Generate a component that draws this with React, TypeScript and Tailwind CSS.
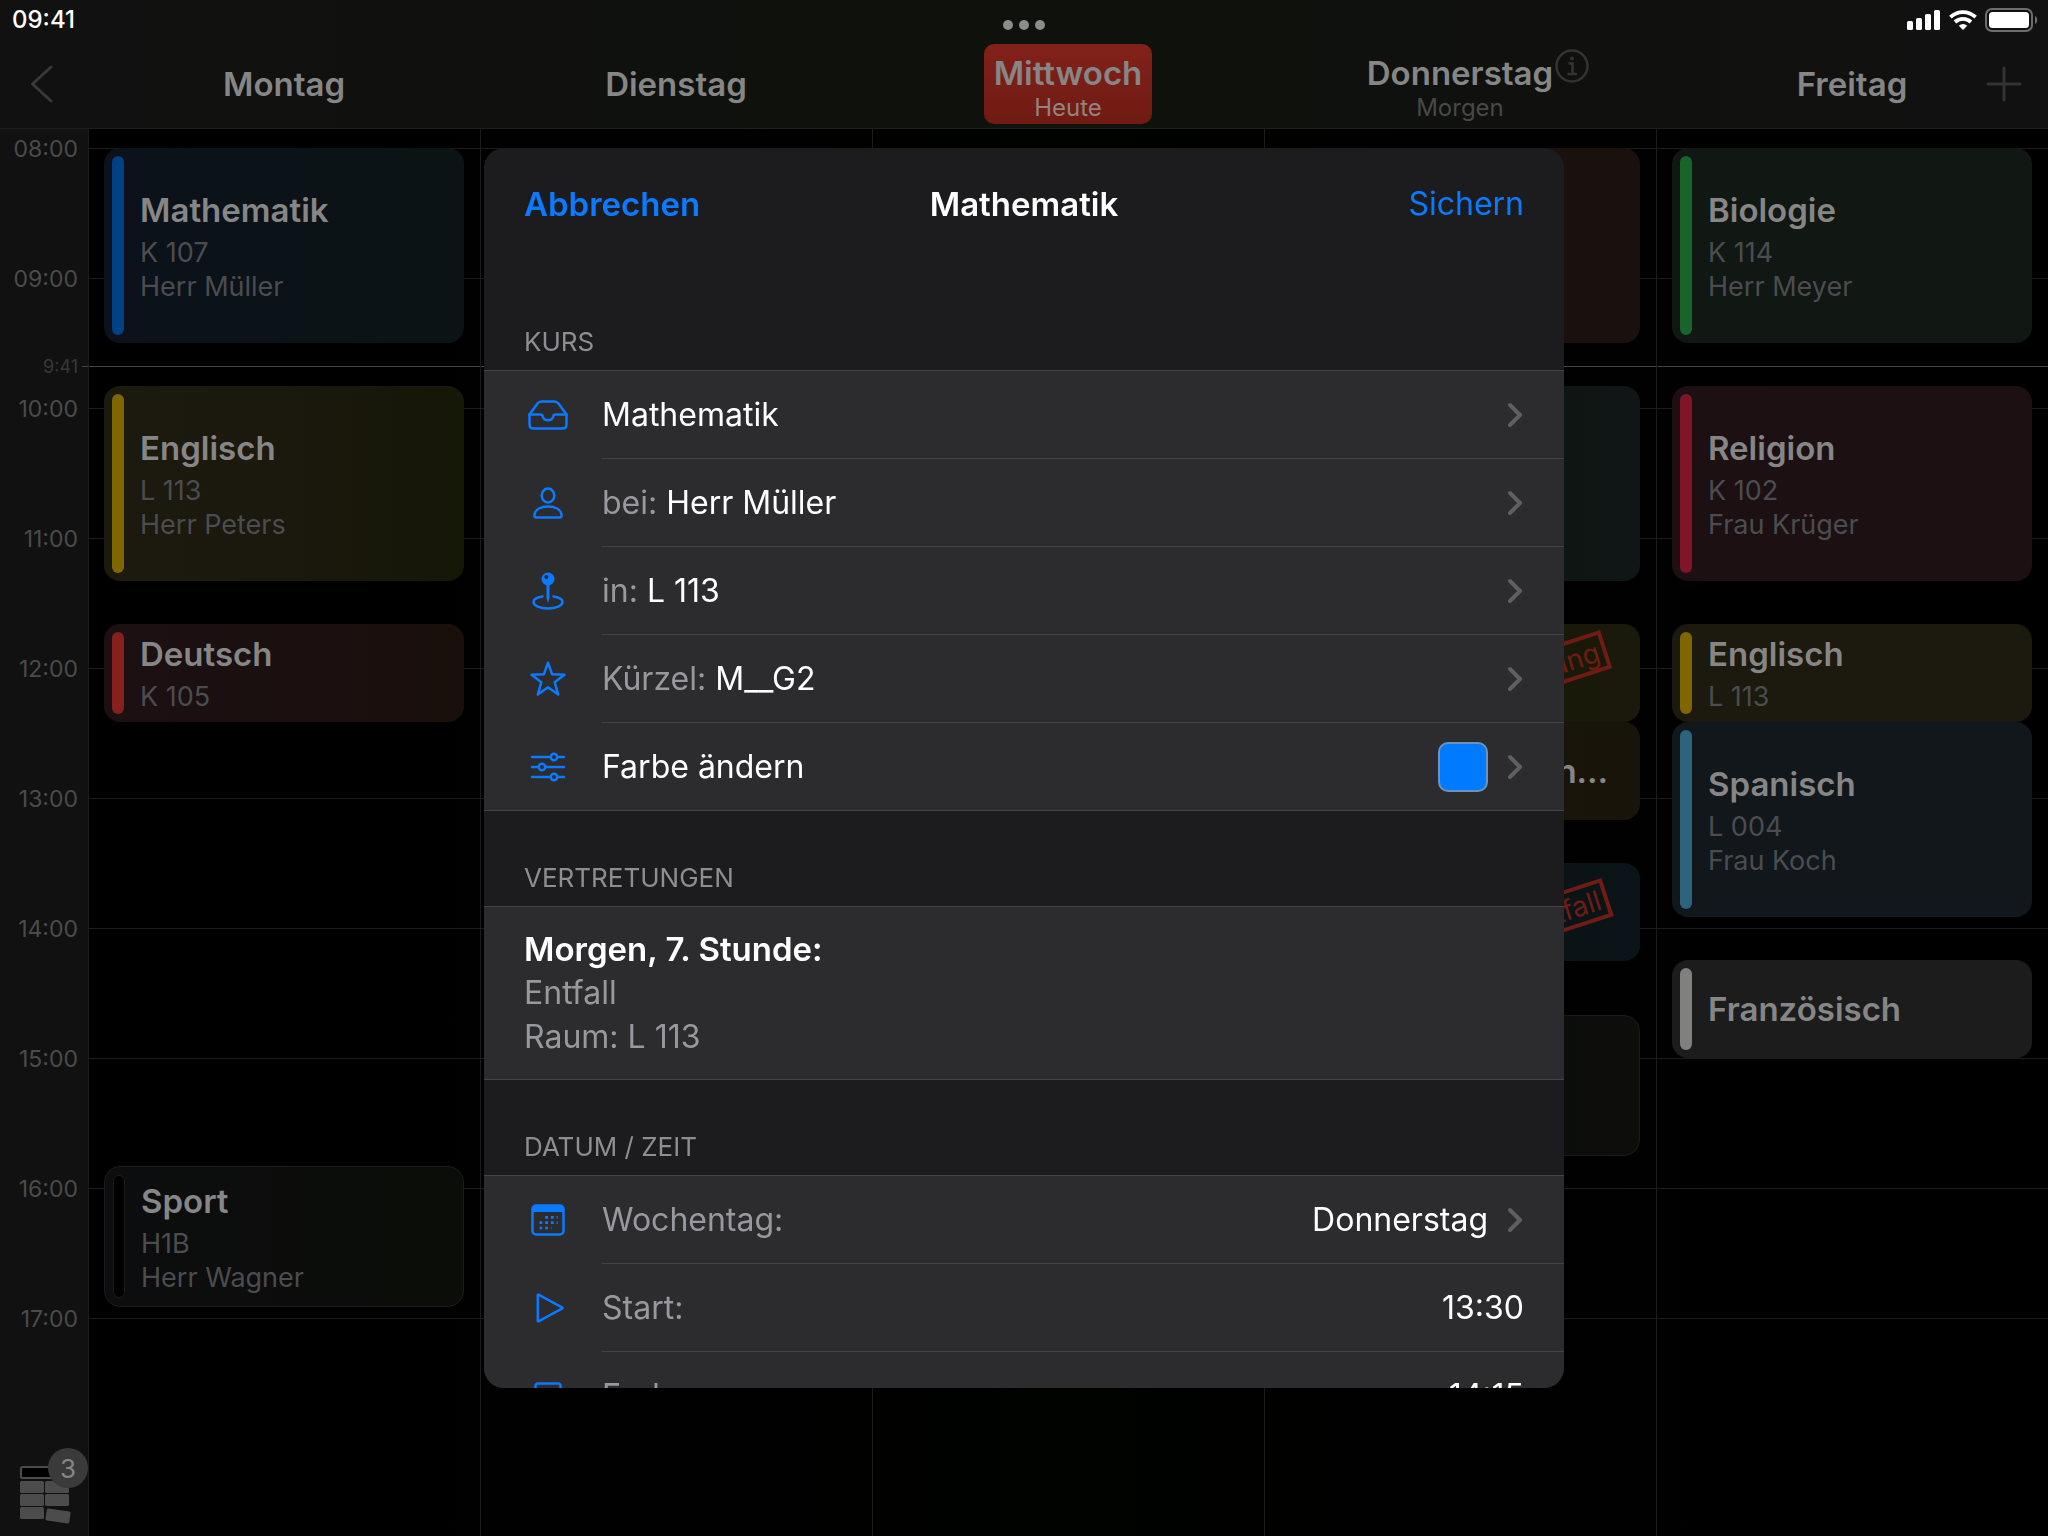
import React from 'react';

interface Lesson {
  start: string;
  end: string;
  title?: string;
  room?: string;
  teacher?: string;
  card: string;
  bar: string;
  stamp?: string;
}

interface Day {
  name: string;
  hint?: string;
  today?: boolean;
  info?: boolean;
  lessons: Lesson[];
}

const HOUR_HEIGHT = 130;
const DAY_START = 8 * 60;

const hours = ['08:00', '09:00', '10:00', '11:00', '12:00', '13:00', '14:00', '15:00', '16:00', '17:00'];

const days: Day[] = [
  {
    name: 'Montag',
    lessons: [
      { start: '08:00', end: '09:30', title: 'Mathematik', room: 'K 107', teacher: 'Herr Müller', card: 'bg-linear-to-r from-[#0c111b] to-[#0b1414]', bar: 'bg-[#004085]' },
      { start: '09:50', end: '11:20', title: 'Englisch', room: 'L 113', teacher: 'Herr Peters', card: 'bg-linear-to-r from-[#1c190f] via-[#1b180d] to-[#151707]', bar: 'bg-[#806600]' },
      { start: '11:40', end: '12:25', title: 'Deutsch', room: 'K 105', card: 'bg-linear-to-r from-[#1c1013] to-[#190f0b]', bar: 'bg-[#86201a]' },
      { start: '15:50', end: '16:55', title: 'Sport', room: 'H1B', teacher: 'Herr Wagner', card: 'border border-[#1c1c1c] bg-linear-to-r from-[#0d0d0f] to-[#0b0d08]', bar: 'border border-[#1c1c1c] bg-black' },
    ],
  },
  { name: 'Dienstag', lessons: [] },
  { name: 'Mittwoch', hint: 'Heute', today: true, lessons: [] },
  {
    name: 'Donnerstag',
    hint: 'Morgen',
    info: true,
    lessons: [
      { start: '08:00', end: '09:30', card: 'bg-[#1a100d]', bar: 'bg-[#804a00]' },
      { start: '09:50', end: '11:20', card: 'bg-linear-to-r from-[#0c150f] to-[#0f1615]', bar: 'bg-[#1c6450]' },
      { start: '11:40', end: '12:25', card: 'bg-linear-to-r from-[#141804] to-[#1a190b]', bar: 'bg-[#806600]', stamp: 'Vertretung' },
      { start: '12:25', end: '13:10', title: 'Mathe-Förderunterricht', card: 'bg-linear-to-r from-[#141504] to-[#19140b]', bar: 'bg-[#6a4a20]' },
      { start: '13:30', end: '14:15', card: 'bg-linear-to-r from-[#08120c] to-[#0b1418]', bar: 'bg-[#004085]', stamp: 'Entfall' },
      { start: '14:40', end: '15:45', card: 'border border-[#1a1c18] bg-linear-to-r from-[#090c05] to-[#0d0e0c]', bar: 'border border-[#1c1c1c] bg-black' },
    ],
  },
  {
    name: 'Freitag',
    lessons: [
      { start: '08:00', end: '09:30', title: 'Biologie', room: 'K 114', teacher: 'Herr Meyer', card: 'bg-[#111713]', bar: 'bg-[#19642a]' },
      { start: '09:50', end: '11:20', title: 'Religion', room: 'K 102', teacher: 'Frau Krüger', card: 'bg-[#1c1013]', bar: 'bg-[#80152a]' },
      { start: '11:40', end: '12:25', title: 'Englisch', room: 'L 113', card: 'bg-[#1c190f]', bar: 'bg-[#806600]' },
      { start: '12:25', end: '13:55', title: 'Spanisch', room: 'L 004', teacher: 'Frau Koch', card: 'bg-[#12171b]', bar: 'bg-[#2d647d]' },
      { start: '14:15', end: '15:00', title: 'Französisch', card: 'bg-[#1c1c1d]', bar: 'bg-[#80807e]' },
    ],
  },
];

const toMinutes = (time: string) => {
  const [h, m] = time.split(':').map(Number);
  return h * 60 + m;
};

const toPixels = (minutes: number) => Math.round((minutes * HOUR_HEIGHT) / 60);

const StatusBar: React.FC = () => (
  <div className="grid h-10 grid-cols-3 items-center px-[10px] text-white">
    <span className="pl-[2px] text-2xl font-medium">09:41</span>
    <div className="flex justify-center gap-[6px] pt-[10px]">
      <span className="size-[10px] rounded-full bg-[#8c8c8c]" />
      <span className="size-[10px] rounded-full bg-[#8c8c8c]" />
      <span className="size-[10px] rounded-full bg-[#8c8c8c]" />
    </div>
    <div className="flex items-center justify-end gap-2">
      <svg className="h-5 w-[34px]" viewBox="0 0 34 20" fill="currentColor">
        <rect x="0" y="11" width="6" height="9" rx="1.5" />
        <rect x="9" y="8" width="6" height="12" rx="1.5" />
        <rect x="18" y="4" width="6" height="16" rx="1.5" />
        <rect x="27" y="0" width="6" height="20" rx="1.5" />
      </svg>
      <svg className="h-5 w-7" viewBox="0 0 28 20" fill="none" stroke="currentColor" strokeWidth="3.8">
        <path d="M1.4 7.2a18.2 18.2 0 0 1 25.2 0" />
        <path d="M6 12a11.6 11.6 0 0 1 16 0" />
        <path d="M14 20l-4.2-4.2a6 6 0 0 1 8.4 0z" fill="currentColor" stroke="none" />
      </svg>
      <svg className="h-6 w-[53px]" viewBox="0 0 53 24">
        <rect x="1" y="1" width="46" height="22" rx="6" fill="none" stroke="#6e6e6e" strokeWidth="2" />
        <rect x="4" y="4" width="40" height="16" rx="3.5" fill="#fff" />
        <path d="M50 8c3 1.2 3 6.8 0 8z" fill="#6e6e6e" />
      </svg>
    </div>
  </div>
);

const DayHeading: React.FC<{ day: Day }> = ({ day }) => (
  <div className="flex items-center justify-center">
    <div
      className={`relative flex h-20 flex-col items-center justify-center rounded-[10px] px-[10px] ${
        day.today ? 'bg-linear-to-b from-[#82211a] to-[#6f1b12]' : ''
      } ${day.hint ? 'pt-2' : ''}`}
    >
      <span className="text-[33px] leading-10 font-semibold text-[#868686]">{day.name}</span>
      {day.hint && (
        <span className={`text-2xl leading-[30px] ${day.today ? 'text-[#918381]' : 'text-[#484947]'}`}>{day.hint}</span>
      )}
      {day.info && (
        <button aria-label="Info" className="absolute top-[5px] left-full -ml-2">
          <svg className="size-[34px]" viewBox="0 0 34 34" fill="none" stroke="#333432" strokeWidth="2.5">
            <circle cx="17" cy="17" r="15.5" />
            <path d="M13.5 14.5h4V25M12.5 25H22" />
            <circle cx="17" cy="9.5" r="2" fill="#333432" stroke="none" />
          </svg>
        </button>
      )}
    </div>
  </div>
);

const Header: React.FC = () => (
  <header className="border-b border-[#1e1e1e] bg-linear-to-r from-[#111111] via-[#0f110c] to-[#111111]">
    <StatusBar />
    <div className="relative flex h-[88px]">
      <button aria-label="Zurück" className="flex w-[88px] items-center pl-[30px]">
        <svg className="h-[38px] w-[23px]" viewBox="0 0 23 38" fill="none" stroke="#393939" strokeWidth="3" strokeLinecap="round" strokeLinejoin="round">
          <path d="M21 2L2.5 19 21 36" />
        </svg>
      </button>
      <div className="grid flex-1 grid-cols-5">
        {days.map((day) => (
          <DayHeading key={day.name} day={day} />
        ))}
      </div>
      <button aria-label="Stunde hinzufügen" className="absolute inset-y-0 right-[26px]">
        <svg className="size-9" viewBox="0 0 36 36" stroke="#333333" strokeWidth="3" strokeLinecap="round">
          <path d="M18 2v32M2 18h32" />
        </svg>
      </button>
    </div>
  </header>
);

const LessonCard: React.FC<{ lesson: Lesson; offset: number }> = ({ lesson, offset }) => (
  <article
    className={`relative flex gap-4 rounded-2xl p-2 ${lesson.card}`}
    style={{ marginTop: offset, height: toPixels(toMinutes(lesson.end) - toMinutes(lesson.start)) }}
  >
    <span className={`w-3 shrink-0 rounded-full ${lesson.bar}`} />
    <div className="flex min-w-0 flex-1 flex-col justify-center">
      {lesson.title && (
        <h3 className={`shrink-0 truncate pr-5 text-[33px] leading-[44px] font-semibold text-[#868686] ${lesson.room ? 'mb-1' : ''}`}>
          {lesson.title}
        </h3>
      )}
      {lesson.room && <p className="text-[27px] leading-[34px] text-[#4b4c50]">{lesson.room}</p>}
      {lesson.teacher && <p className="text-[27px] leading-[34px] text-[#4b4c50]">{lesson.teacher}</p>}
    </div>
    {lesson.stamp && (
      <div className="absolute inset-y-0 right-[30px] flex items-center">
        <span className="-rotate-18 border-4 border-[#6f1c14] px-1 text-[28px] leading-8 text-[#6f1c14]">{lesson.stamp}</span>
      </div>
    )}
  </article>
);

const DayColumn: React.FC<{ day: Day }> = ({ day }) => (
  <div className="border-l border-[#1c1c1c] pt-[19px] pr-4 pl-[15px]">
    {day.lessons.map((lesson, i) => {
      const previousEnd = i === 0 ? DAY_START : toMinutes(day.lessons[i - 1].end);
      return <LessonCard key={lesson.start} lesson={lesson} offset={toPixels(toMinutes(lesson.start) - previousEnd)} />;
    })}
  </div>
);

const Sidebar: React.FC = () => (
  <aside className="flex w-[88px] flex-col justify-between bg-[#111111]">
    <div className="grid">
      <div className="col-start-1 row-start-1 pt-1">
        {hours.map((hour) => (
          <div key={hour} className="h-[130px] pr-[10px] text-right text-[23px] leading-8 text-[#4b4b4b]">
            {hour}
          </div>
        ))}
      </div>
      <div className="col-start-1 row-start-1 pt-[226px] pr-[10px] text-right text-lg leading-6 text-[#383838]">9:41</div>
    </div>
    <button aria-label="3 offene Stunden" className="relative mb-3 ml-5 h-[76px] w-[68px]">
      <svg className="h-[76px] w-[52px]" viewBox="0 0 52 76" fill="#4c4c4c">
        <rect x="1" y="19" width="47" height="11" rx="1.5" fill="#000" stroke="#4c4c4c" strokeWidth="2" />
        <rect x="0" y="33" width="24" height="12" rx="1.5" />
        <rect x="25" y="33" width="24" height="12" rx="1.5" />
        <rect x="0" y="46" width="24" height="12" rx="1.5" />
        <rect x="25" y="46" width="24" height="12" rx="1.5" />
        <rect x="0" y="59" width="24" height="12" rx="1.5" />
        <rect x="26" y="62" width="24" height="12" rx="1.5" transform="rotate(8 38 68)" />
      </svg>
      <span className="absolute top-0 right-0 flex size-10 items-center justify-center rounded-full bg-[#3a3a3a] text-[26px] text-[#868686]">3</span>
    </button>
  </aside>
);

const Timetable: React.FC = () => (
  <main className="flex flex-1">
    <Sidebar />
    <div className="grid flex-1 bg-linear-to-r from-black via-[#010300] to-black">
      {/* Hour lines */}
      <div className="col-start-1 row-start-1 pt-[19px]">
        {hours.map((hour) => (
          <div key={hour} className="h-[130px] border-t border-[#1c1c1c]" />
        ))}
      </div>
      {/* Current time */}
      <div className="col-start-1 row-start-1 -ml-[6px] pt-[237px]">
        <div className="border-t border-[#444444]" />
      </div>
      <div className="z-10 col-start-1 row-start-1 grid grid-cols-5">
        {days.map((day) => (
          <DayColumn key={day.name} day={day} />
        ))}
      </div>
    </div>
  </main>
);

const iconProps = {
  fill: 'none',
  stroke: '#0a7aff',
  strokeWidth: 2.5,
  strokeLinecap: 'round' as const,
  strokeLinejoin: 'round' as const,
};

const TrayIcon = () => (
  <svg className="h-[30px] w-10" viewBox="0 0 40 30" {...iconProps}>
    <path d="M1.5 14.5L9.5 3.5Q11 1.5 13.5 1.5h13Q29 1.5 30.5 3.5L38.5 14.5V24.5Q38.5 28.5 34.5 28.5h-29Q1.5 28.5 1.5 24.5z" />
    <path d="M1.5 14.5H12.5Q14.5 14.5 14.8 16.5a5.3 4.6 0 0 0 10.4 0Q25.5 14.5 27.5 14.5h11" />
  </svg>
);

const PersonIcon = () => (
  <svg className="h-8 w-[30px]" viewBox="0 0 30 32" {...iconProps}>
    <ellipse cx="15" cy="8.5" rx="6.3" ry="7" />
    <path d="M3.5 30.5Q1 30.5 1.5 27.5C2.5 22.5 8 19.5 15 19.5s12.500 3 13.500 8q.5 3-2 3z" />
  </svg>
);

const PinIcon = () => (
  <svg className="h-[38px] w-8" viewBox="0 0 32 38" {...iconProps}>
    <path d="M10.5 24.5C5 25.3 1.5 27.5 1.5 30c0 3.6 6.5 6.5 14.5 6.5S30.5 33.6 30.5 30c0-2.500-3.500-4.700-9-5.500" />
    <path d="M14.5 12h3v14L16 31l-1.500-5z" fill="#0a7aff" stroke="none" />
    <circle cx="16" cy="7" r="6.5" fill="#0a7aff" stroke="none" />
    <circle cx="14.3" cy="5" r="2" fill="#2c2c2e" stroke="none" />
  </svg>
);

const StarIcon = () => (
  <svg className="h-9 w-[38px]" viewBox="0 0 38 36" {...iconProps}>
    <path d="M19 1.7L23.1 13.3 35.5 13.7 25.7 21.2 29.2 33.5 19 26.3 8.8 33.5 12.3 21.2 2.5 13.7 14.9 13.3z" />
  </svg>
);

const SlidersIcon = () => (
  <svg className="h-[30px] w-9" viewBox="0 0 36 30" {...iconProps}>
    <path d="M2 5h18M28 5h6M2 15h6M16 15h18M2 25h18M28 25h6" />
    <circle cx="24" cy="5" r="3.2" />
    <circle cx="12" cy="15" r="3.2" />
    <circle cx="24" cy="25" r="3.2" />
  </svg>
);

const CalendarIcon = () => (
  <svg className="h-8 w-[34px]" viewBox="0 0 34 32" {...iconProps}>
    <rect x="1.5" y="1.5" width="31" height="29" rx="3.5" />
    <path d="M2 5h30" strokeLinecap="butt" strokeWidth="6" />
    <path d="M14.2 13.3h12.5M8.5 18.7h18.2M8.5 24h12" strokeWidth="2.7" strokeDasharray="2.8 2.9" strokeLinecap="butt" />
  </svg>
);

const PlayIcon = () => (
  <svg className="ml-1 h-[30px] w-7" viewBox="0 0 28 30" {...iconProps}>
    <path d="M3 1.8Q1.8 1.2 1.8 2.5v25q0 1.3 1.2.7L26 15.7q1.2-.7 0-1.4z" />
  </svg>
);

const StopIcon = () => (
  <svg className="size-7" viewBox="0 0 28 28" {...iconProps}>
    <rect x="1.5" y="1.5" width="25" height="25" rx="2.5" />
  </svg>
);

const Chevron = () => (
  <svg className="h-[26px] w-4" viewBox="0 0 16 26" fill="none" stroke="#5f5f63" strokeWidth="4" strokeLinecap="round" strokeLinejoin="round">
    <path d="M2 3l10 10L2 23" />
  </svg>
);

interface RowProps {
  icon: React.ReactNode;
  label?: string;
  text?: string;
  value?: React.ReactNode;
  chevron?: boolean;
}

const Row: React.FC<RowProps> = ({ icon, label, text, value, chevron }) => (
  <li className="group">
    <button className="flex h-22 w-full gap-[30px] pl-10 text-left group-last:h-[87px]">
      <span className="flex h-full w-12 items-center justify-center">{icon}</span>
      <span className="flex h-full flex-1 items-center gap-5 border-b border-[#434346] pr-10 group-last:border-b-0">
        <span className="flex-1 text-[#98989f]">
          {label} <span className="text-white">{text}</span>
        </span>
        {value}
        {chevron && <Chevron />}
      </span>
    </button>
  </li>
);

const Section: React.FC<{ title: string; children: React.ReactNode }> = ({ title, children }) => (
  <section>
    <h2 className="flex h-24 items-end border-b border-[#434346] px-10 pb-3 text-[26px] leading-8 text-[#8d8d93]">{title}</h2>
    <div className="border-b border-[#434346] bg-[#2c2c2e]">{children}</div>
  </section>
);

const CourseDialog: React.FC = () => (
  <div className="fixed inset-0 z-20 flex justify-center py-[148px]">
    <div role="dialog" aria-label="Mathematik" className="flex w-full max-w-[1080px] flex-col overflow-hidden rounded-[20px] bg-[#1c1c1e] text-[32px] leading-[44px]">
      <div className="grid h-28 shrink-0 grid-cols-3 items-center px-10">
        <button className="justify-self-start text-[33px] font-semibold text-[#0a7aff]">Abbrechen</button>
        <h1 className="text-center text-[33px] font-semibold text-white">Mathematik</h1>
        <button className="justify-self-end text-[#0a7aff]">Sichern</button>
      </div>
      <div className="min-h-0 flex-1 overflow-hidden pt-[15px]">
        <Section title="KURS">
          <ul>
            <Row icon={<TrayIcon />} text="Mathematik" chevron />
            <Row icon={<PersonIcon />} label="bei:" text="Herr Müller" chevron />
            <Row icon={<PinIcon />} label="in:" text="L 113" chevron />
            <Row icon={<StarIcon />} label="Kürzel:" text="M__G2" chevron />
            <Row
              icon={<SlidersIcon />}
              text="Farbe ändern"
              value={<span className="size-[50px] rounded-[10px] border-2 border-[#6d92bd] bg-[#007aff]" />}
              chevron
            />
          </ul>
        </Section>
        <Section title="VERTRETUNGEN">
          <div className="px-10 py-5 text-[#98989f]">
            <h3 className="text-[33px] font-semibold text-white">Morgen, 7. Stunde:</h3>
            <p>Entfall</p>
            <p>Raum: L 113</p>
          </div>
        </Section>
        <Section title="DATUM / ZEIT">
          <ul>
            <Row icon={<CalendarIcon />} label="Wochentag:" value={<span className="text-white">Donnerstag</span>} chevron />
            <Row icon={<PlayIcon />} label="Start:" value={<span className="text-white">13:30</span>} />
            <Row icon={<StopIcon />} label="Ende:" value={<span className="text-white">14:15</span>} />
          </ul>
        </Section>
      </div>
    </div>
  </div>
);

const App: React.FC = () => {
  return (
    <div className="flex min-h-screen flex-col bg-black font-['Inter',sans-serif]">
      <Header />
      <Timetable />
      <CourseDialog />
    </div>
  );
};

export default App;
